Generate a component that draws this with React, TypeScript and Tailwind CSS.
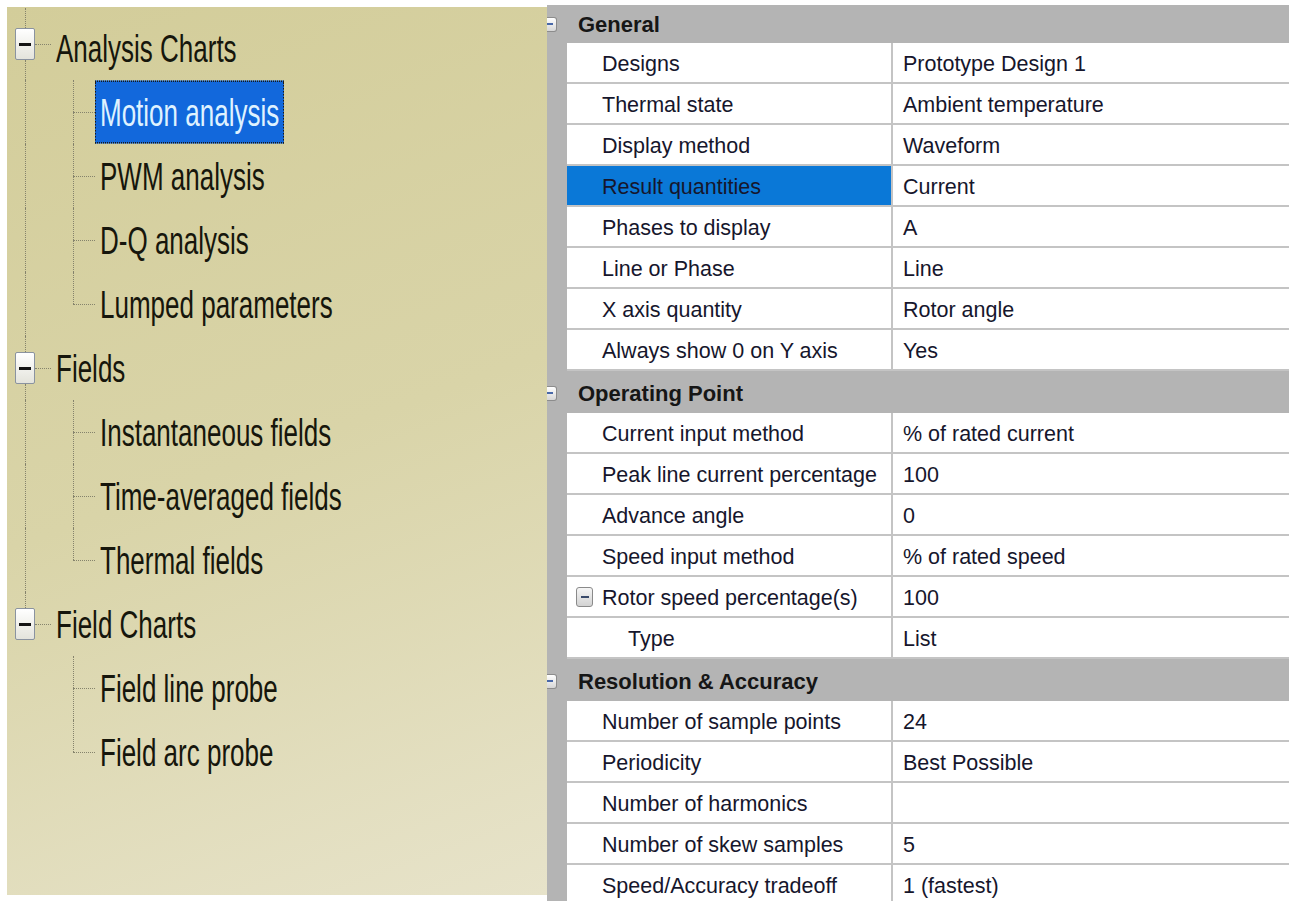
import React from "react";

type TreeNode = { label: string; children: string[] };

const tree: TreeNode[] = [
  {
    label: "Analysis Charts",
    children: ["Motion analysis", "PWM analysis", "D-Q analysis", "Lumped parameters"],
  },
  {
    label: "Fields",
    children: ["Instantaneous fields", "Time-averaged fields", "Thermal fields"],
  },
  {
    label: "Field Charts",
    children: ["Field line probe", "Field arc probe"],
  },
];

type PropRow = {
  name: string;
  value: string;
  selected?: boolean;
  toggle?: boolean;
  sub?: boolean;
};

type Section = { title: string; rows: PropRow[] };

const sections: Section[] = [
  {
    title: "General",
    rows: [
      { name: "Designs", value: "Prototype Design 1" },
      { name: "Thermal state", value: "Ambient temperature" },
      { name: "Display method", value: "Waveform" },
      { name: "Result quantities", value: "Current", selected: true },
      { name: "Phases to display", value: "A" },
      { name: "Line or Phase", value: "Line" },
      { name: "X axis quantity", value: "Rotor angle" },
      { name: "Always show 0 on Y axis", value: "Yes" },
    ],
  },
  {
    title: "Operating Point",
    rows: [
      { name: "Current input method", value: "% of rated current" },
      { name: "Peak line current percentage", value: "100" },
      { name: "Advance angle", value: "0" },
      { name: "Speed input method", value: "% of rated speed" },
      { name: "Rotor speed percentage(s)", value: "100", toggle: true },
      { name: "Type", value: "List", sub: true },
    ],
  },
  {
    title: "Resolution & Accuracy",
    rows: [
      { name: "Number of sample points", value: "24" },
      { name: "Periodicity", value: "Best Possible" },
      { name: "Number of harmonics", value: "" },
      { name: "Number of skew samples", value: "5" },
      { name: "Speed/Accuracy tradeoff", value: "1 (fastest)" },
    ],
  },
];

function TreeLabel({ text, selected }: { text: string; selected?: boolean }) {
  return (
    <span
      className={`inline-block origin-center scale-y-[1.5] whitespace-nowrap px-[4px] text-[26px] leading-[40px] ${
        selected
          ? "border border-dotted border-[#1a1a1a] bg-[#1268dc] text-[#dff2ff]"
          : "border border-transparent text-[#16160c]"
      }`}
    >
      {text}
    </span>
  );
}

function ExpandBox() {
  return (
    <div className="ml-[8px] flex h-[32px] w-[20px] items-center justify-center rounded-[2px] border border-[#8a93a0] bg-gradient-to-b from-white to-[#e4e4dc]">
      <div className="h-[3px] w-[12px] bg-[#141414]" />
    </div>
  );
}

function ParentRow({ label, first, last }: { label: string; first: boolean; last: boolean }) {
  return (
    <div className="flex h-16 items-center">
      <div className="flex h-full w-[44px] shrink-0 flex-col">
        <div
          className={`ml-[18px] flex-1 border-l border-dotted border-[#85836c] ${
            first ? "-mt-[8px]" : ""
          }`}
        />
        <div className="flex items-center">
          <ExpandBox />
          <div className="w-[16px] border-t border-dotted border-[#85836c]" />
        </div>
        <div
          className={`ml-[18px] flex-1 ${last ? "" : "border-l border-dotted border-[#85836c]"}`}
        />
      </div>
      <TreeLabel text={label} />
    </div>
  );
}

function ChildRow({
  label,
  lastChild,
  parentLast,
  selected,
}: {
  label: string;
  lastChild: boolean;
  parentLast: boolean;
  selected?: boolean;
}) {
  return (
    <div className="flex h-16 items-center">
      <div className="h-full w-[46px] shrink-0">
        {!parentLast && (
          <div className="ml-[18px] h-full border-l border-dotted border-[#85836c]" />
        )}
      </div>
      <div className="flex h-full w-[42px] shrink-0 flex-col">
        <div className="ml-[20px] h-1/2 border-l border-dotted border-[#85836c]" />
        <div
          className={`ml-[20px] h-1/2 w-[22px] border-t border-dotted border-[#85836c] ${
            lastChild ? "" : "border-l"
          }`}
        />
      </div>
      <TreeLabel text={label} selected={selected} />
    </div>
  );
}

function SectionHeader({ title, first }: { title: string; first?: boolean }) {
  return (
    <div className={`flex shrink-0 items-center ${first ? "h-[38px]" : "h-[42px] pt-[2px]"}`}>
      <div className="flex h-[15px] w-[10px] items-center rounded-r-[3px] border border-l-0 border-[#8c8c8c] bg-gradient-to-b from-white to-[#d6d6d6]">
        <div className="h-[2px] w-[6px] bg-[#4868a8]" />
      </div>
      <span className="ml-[21px] text-[22px] font-bold text-[#161616]">{title}</span>
    </div>
  );
}

function PropertyRow({ row }: { row: PropRow }) {
  const pad = row.toggle ? "pl-[9px]" : row.sub ? "pl-[61px]" : "pl-[35px]";
  return (
    <div className="flex h-[41px] shrink-0">
      <div className="w-5 shrink-0" />
      <div className="flex flex-1 border-b-2 border-[#c4c4c4] bg-white">
        <div
          className={`flex w-[326px] shrink-0 items-center border-r-2 border-[#c4c4c4] pt-[3px] ${pad} ${
            row.selected ? "bg-[#0a78d7]" : ""
          }`}
        >
          {row.toggle && (
            <div className="mr-[9px] -mt-[3px] flex h-[20px] w-[17px] items-center justify-center rounded-[3px] border border-[#8a8a8a] bg-gradient-to-b from-[#f6f6f6] to-[#d2d2d2]">
              <div className="h-[2px] w-[8px] bg-[#3a4a6a]" />
            </div>
          )}
          <span className="whitespace-nowrap">{row.name}</span>
        </div>
        <div className="flex flex-1 items-center pl-[10px] pt-[3px]">
          <span className="whitespace-nowrap">{row.value}</span>
        </div>
      </div>
    </div>
  );
}

export default function App() {
  return (
    <div className="flex h-[901px] w-[1289px] overflow-hidden bg-white font-['Liberation_Sans',Arial,sans-serif]">
      {/* results tree */}
      <div className="ml-[7px] mt-[7px] h-[888px] w-[540px] shrink-0 bg-[linear-gradient(160deg,#d3cd9a_0%,#d9d4a8_50%,#e7e3ca_100%)] pt-[9px]">
        {tree.map((node, i) => {
          const parentLast = i === tree.length - 1;
          return (
            <div key={node.label}>
              <ParentRow label={node.label} first={i === 0} last={parentLast} />
              {node.children.map((child, j) => (
                <ChildRow
                  key={child}
                  label={child}
                  lastChild={j === node.children.length - 1}
                  parentLast={parentLast}
                  selected={child === "Motion analysis"}
                />
              ))}
            </div>
          );
        })}
      </div>

      {/* property grid */}
      <div className="mt-[5px] flex h-[896px] flex-1 flex-col overflow-hidden bg-[#b4b4b4] text-[21.5px] text-[#16162c]">
        {sections.map((s, i) => (
          <React.Fragment key={s.title}>
            <SectionHeader title={s.title} first={i === 0} />
            {s.rows.map((r) => (
              <PropertyRow key={r.name} row={r} />
            ))}
          </React.Fragment>
        ))}
      </div>
    </div>
  );
}
